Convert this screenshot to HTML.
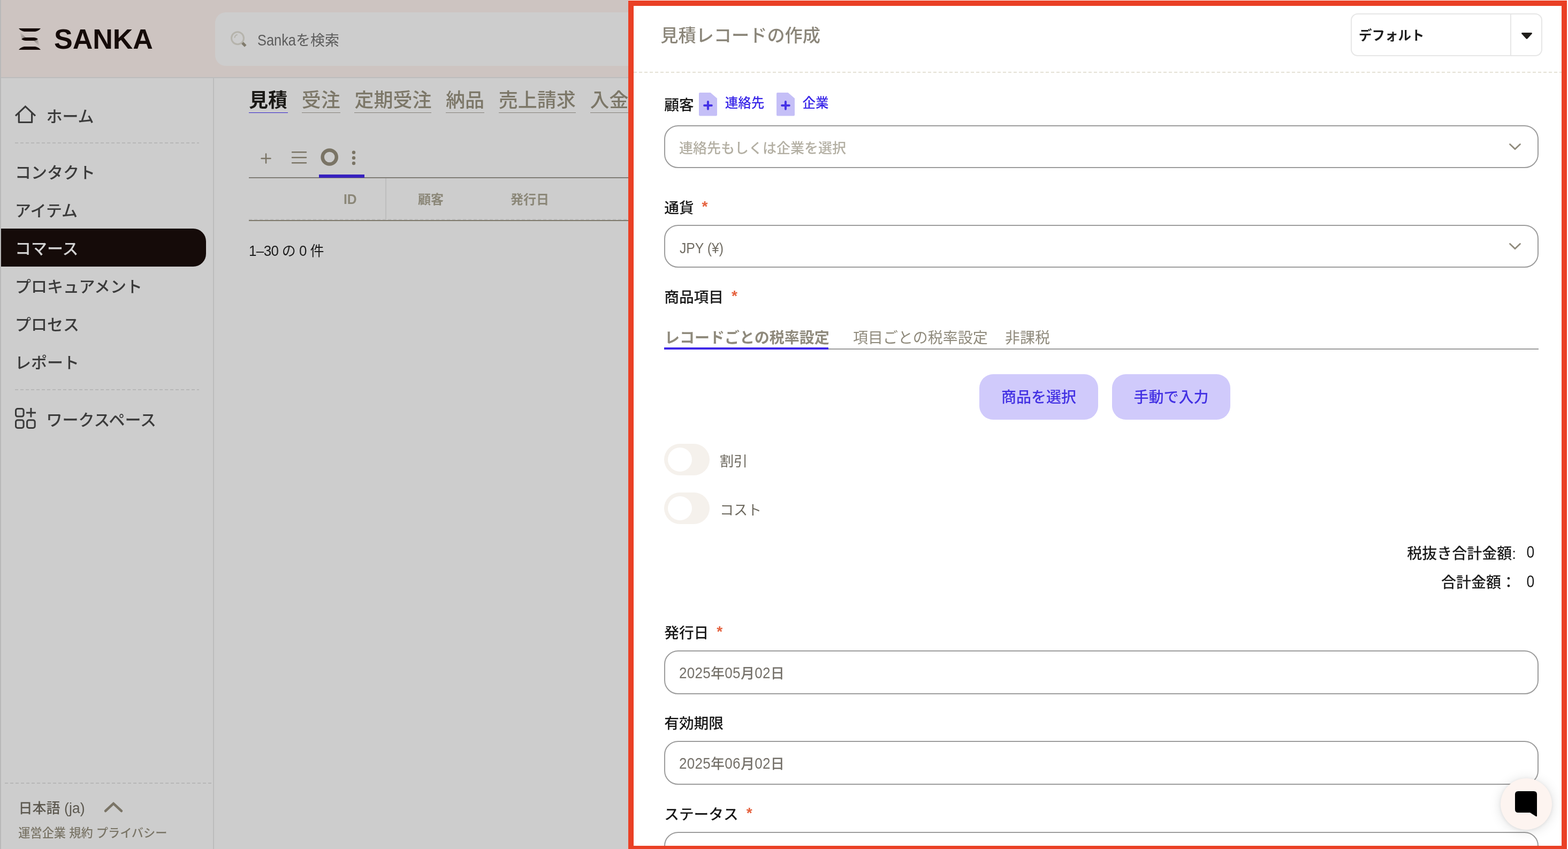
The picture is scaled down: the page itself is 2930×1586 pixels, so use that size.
<!DOCTYPE html>
<html lang="ja">
<head>
<meta charset="utf-8">
<title>Sanka - 見積レコードの作成</title>
<style>
*{box-sizing:border-box;margin:0;padding:0}
html,body{width:2930px;height:1586px;overflow:hidden}
body{will-change:transform;background:#cdcdcd;font-family:"Liberation Sans","Noto Sans CJK JP",sans-serif;font-weight:500;color:#1a1a1a;position:relative}
#root{position:absolute;left:0;top:0;width:2930px;height:1586px;overflow:hidden}
.abs{position:absolute}
.t{position:absolute;white-space:nowrap;line-height:1}
svg{position:absolute;overflow:visible}
.sy{display:inline-block;transform-origin:0 84.6%}

/* ---------- dimmed app behind the panel ---------- */
#edge{left:0;top:0;width:2px;height:1586px;background:#b9b9b9}
#hdr{left:2px;top:0;width:2928px;height:144px;background:#cdc4c1}
#hdrline{left:2px;top:144px;width:2928px;height:2px;background:#bdbdbd}
#brand{left:101px;top:47px;font-size:52px;font-weight:700;color:#150b09;letter-spacing:0}
#search{left:402px;top:23px;width:2400px;height:100px;border-radius:20px;background:#cdcdcd}
#searchtxt{left:481px;top:63px;font-size:27px;font-weight:400;color:#5c5c5c}
#side{left:2px;top:146px;width:396px;height:1440px}
#sideline{left:398px;top:146px;width:2px;height:1440px;background:#bcbcbc}
.nav{position:absolute;left:28px;font-size:30px;font-weight:500;color:#3b3b3b;white-space:nowrap;line-height:1}
.dash{position:absolute;height:2px;background:repeating-linear-gradient(90deg,#b7b7b7 0 6px,transparent 6px 10px)}
#active{left:2px;top:427px;width:383px;height:71px;background:#150b09;border-radius:0 24px 24px 0}
.tab{position:absolute;top:170px;font-size:36px;color:#7c7768;white-space:nowrap;line-height:1;height:41px;border-bottom:1px solid #85817a}
.tab.on{color:#1a1916;font-weight:700;border-bottom:1px solid #3322cc;width:73px}
.th{position:absolute;font-size:24px;font-weight:700;color:#8b8778;white-space:nowrap;line-height:1}

/* ---------- panel ---------- */
#panel{left:1174px;top:0;width:1756px;height:1586px;background:#fff}
#frame{left:1174px;top:1px;width:1754px;height:1589px;border:10px solid #ea4025}
.lbl{position:absolute;left:1241.200px;font-size:27.700px;font-weight:500;color:#171717;white-space:nowrap;line-height:1}
.req{color:#e5623f;font-weight:700;margin-left:15px;font-size:28px;line-height:0;position:relative;top:-3px}
.field{position:absolute;left:1241px;width:1634px;border:2px solid #9c9c9c;border-radius:26px;background:#fff}
.val{position:absolute;left:1270px;font-size:26px;color:#75716a;white-space:nowrap;line-height:1}
.btn{position:absolute;top:699px;height:85px;border-radius:26px;background:#d0cafb;color:#4331e3;font-size:28px;font-weight:500;text-align:center;line-height:87.500px;white-space:nowrap}
.tog{position:absolute;left:1241px;width:85px;height:59px;border-radius:30px;background:#f5f1ec}
.tog i{position:absolute;left:7px;top:7px;width:45px;height:45px;border-radius:50%;background:#fff}
.toglbl{position:absolute;font-size:26px;font-weight:400;color:#6d695f;white-space:nowrap;line-height:1}
.tot{position:absolute;font-size:28px;color:#1c1c1c;white-space:nowrap;line-height:1}
</style>
</head>
<body>
<div id="root">

<!-- ================= dimmed application ================= -->
<div class="abs" id="hdr"></div>
<div class="abs" id="hdrline"></div>
<div class="abs" id="edge"></div>

<svg style="left:35px;top:53px" width="41" height="40" viewBox="0 0 41 40">
  <defs>
    <linearGradient id="lg1" x1="0" y1="0" x2="1" y2="1"><stop offset="0" stop-color="#cdc4c1"/><stop offset="1" stop-color="#8f8885"/></linearGradient>
    <linearGradient id="lg2" x1="0" y1="0" x2="1" y2="1"><stop offset="0" stop-color="#8f8885"/><stop offset="1" stop-color="#cdc4c1"/></linearGradient>
  </defs>
  <path d="M2 6 L14 18 L5 18 Z" fill="url(#lg1)"/>
  <path d="M27 22 L36 22 L39 34 Z" fill="url(#lg2)"/>
  <path d="M0 0 H41 C38 3.5 34 6 29 6 H12 C7 6 3 3.500 0 0 Z" fill="#150b09"/>
  <path d="M5 20 C8 17.800 10 17 13 17 H28 C31 17 33 17.800 36 20 C33 22.200 31 23 28 23 H13 C10 23 8 22.200 5 20 Z" fill="#150b09"/>
  <path d="M0 40 H41 C38 36.500 34 34 29 34 H12 C7 34 3 36.500 0 40 Z" fill="#150b09"/>
</svg>
<div class="t" id="brand">SANKA</div>

<div class="abs" id="search"></div>
<svg style="left:429px;top:56px" width="34" height="34" viewBox="0 0 34 34">
  <circle cx="15" cy="15.300" r="11.500" fill="none" stroke="#b6b4ac" stroke-width="3"/>
  <path d="M9.500 14 A6 6 0 0 1 14 9" fill="none" stroke="#b6b4ac" stroke-width="2" stroke-linecap="round"/>
  <path d="M24 24.200 L29.800 30" fill="none" stroke="#817b6d" stroke-width="5.200" stroke-linecap="butt"/>
</svg>
<div class="t" id="searchtxt"><span class="sy" style="transform:scale(0.94,1.07);margin-right:-4.500px">Sanka</span>を検索</div>

<!-- sidebar -->
<div class="abs" id="sideline"></div>
<svg style="left:26px;top:194px" width="44" height="40" viewBox="0 0 44 40">
  <path d="M3 22.300 L21.400 4.900 L40 22.300" fill="none" stroke="#3a3a3a" stroke-width="3.200" stroke-linejoin="miter"/>
  <path d="M9.300 17.500 V34.500 H33.600 V17.500" fill="none" stroke="#3a3a3a" stroke-width="3.200" stroke-linejoin="round"/>
</svg>
<div class="nav" style="left:86.500px;top:203px">ホーム</div>
<div class="dash" style="left:28px;top:266px;width:344px"></div>
<div class="nav" style="top:308px">コンタクト</div>
<div class="nav" style="top:379px">アイテム</div>
<div class="abs" id="active"></div>
<div class="nav" style="top:450px;color:#d2d2d2">コマース</div>
<div class="nav" style="top:521px">プロキュアメント</div>
<div class="nav" style="top:592px">プロセス</div>
<div class="nav" style="top:663px">レポート</div>
<div class="dash" style="left:28px;top:727px;width:344px"></div>
<svg style="left:26px;top:760px" width="44" height="44" viewBox="0 0 44 44">
  <g fill="none" stroke="#3a3a3a" stroke-width="3">
    <rect x="3.500" y="3.500" width="14.600" height="14.600" rx="3.500"/>
    <rect x="3.500" y="24.800" width="14.600" height="14.600" rx="3.500"/>
    <rect x="24.600" y="24.800" width="14.600" height="14.600" rx="3.500"/>
    <path d="M23 10.900 H41 M31.900 2 V19.600"/>
  </g>
</svg>
<div class="nav" style="left:86.500px;top:770px">ワークスペース</div>

<div class="dash" style="left:9px;top:1462px;width:388px"></div>
<div class="t" style="left:34.500px;top:1497.400px;font-size:26px;color:#5c584f">日本語 <span class="sy" style="transform:scale(1.03,1.06)">(ja)</span></div>
<svg style="left:192px;top:1494px" width="40" height="28" viewBox="0 0 40 28">
  <path d="M5 21 L20 7 L35 21" fill="none" stroke="#7a7466" stroke-width="4.500" stroke-linecap="round" stroke-linejoin="miter"/>
</svg>
<div class="t" style="left:34.300px;top:1546px;font-size:22.200px;color:#7a7567">運営企業 規約 プライバシー</div>

<!-- main tabs -->
<div class="tab on" style="left:465px">見積</div>
<div class="tab" style="left:563.800px">受注</div>
<div class="tab" style="left:662.400px">定期受注</div>
<div class="tab" style="left:833.100px">納品</div>
<div class="tab" style="left:931.800px">売上請求</div>
<div class="tab" style="left:1102.500px">入金</div>

<!-- toolbar -->
<svg style="left:465px;top:270px" width="230" height="50" viewBox="0 0 230 50">
  <g fill="none" stroke="#7a7465" stroke-linecap="round">
    <path d="M23.500 25.900 H40.500 M32 17.400 V34.400" stroke-width="2.500"/>
    <path d="M81 14.200 H107 M81 24.200 H107 M81 34.200 H107" stroke-width="2.500"/>
    <circle cx="150.700" cy="23.500" r="13.100" stroke-width="6.500"/>
  </g>
  <g fill="#7a7465">
    <circle cx="196" cy="14.800" r="3.200"/><circle cx="196" cy="24.900" r="3.200"/><circle cx="196" cy="35" r="3.200"/>
  </g>
</svg>
<div class="abs" style="left:465px;top:331px;width:760px;height:2px;background:#7f7c76"></div>
<div class="abs" style="left:596px;top:326px;width:85px;height:6px;background:#3721bf"></div>

<!-- table header -->
<div class="abs" style="left:720px;top:333px;width:2px;height:77px;background:#bdbdbd"></div>
<div class="th" style="left:641.500px;top:361px"><span class="sy" style="transform:scale(1.03,1.07)">ID</span></div>
<div class="th" style="left:781px;top:361px">顧客</div>
<div class="th" style="left:954px;top:361px">発行日</div>
<div class="abs" style="left:465px;top:409px;width:760px;height:2px;background:repeating-linear-gradient(90deg,#bebebe 0 6px,transparent 6px 10px)"></div>
<div class="abs" style="left:465px;top:411px;width:760px;height:2px;background:#7e796c"></div>
<div class="t" style="left:465px;top:455.500px;font-size:26px;font-weight:400;color:#1c1c1c;word-spacing:-1px"><span class="sy" style="transform:scaleY(1.07);letter-spacing:-0.600px">1–30</span> の <span class="sy" style="transform:scaleY(1.07)">0</span> 件</div>

<!-- ================= side panel ================= -->
<div class="abs" id="panel"></div>

<div class="t" style="left:1234.300px;top:49.500px;font-size:33.200px;color:#8b867a">見積レコードの作成</div>

<div class="abs" style="left:2524px;top:25px;width:358px;height:80px;border:2px solid #e6e6e6;border-radius:13px;background:#fff"></div>
<div class="abs" style="left:2822px;top:27px;width:2px;height:76px;background:#e6e6e6"></div>
<div class="t" style="left:2539px;top:54.500px;font-size:24.500px;font-weight:700;color:#1f1f1f">デフォルト</div>
<svg style="left:2842px;top:60px" width="22" height="14" viewBox="0 0 22 14">
  <path d="M2.500 1 H19.500 Q21.800 1.300 20.500 3.200 L12.300 12.300 Q11 13.400 9.700 12.300 L1.500 3.200 Q0.200 1.300 2.500 1 Z" fill="#1f1d1a"/>
</svg>

<div class="abs" style="left:1184px;top:134px;width:1734px;height:2px;background:repeating-linear-gradient(90deg,#e4e1d5 0 6px,transparent 6px 10px)"></div>

<!-- 顧客 -->
<div class="lbl" style="top:182.500px">顧客</div>
<svg style="left:1306px;top:173px" width="34" height="44" viewBox="0 0 34 44">
  <path d="M2 0 H21.500 L34 10.700 V41.500 Q34 43.500 32 43.500 H2 Q0 43.500 0 41.500 V2 Q0 0 2 0 Z" fill="#c5bff7"/>
  <path d="M10.100 23.900 H23.800 M16.950 17.050 V30.750" stroke="#4532e6" stroke-width="4" stroke-linecap="round" fill="none"/>
</svg>
<div class="t" style="left:1354.700px;top:181px;font-size:24.500px;color:#3a27e8;font-weight:500">連絡先</div>
<svg style="left:1451px;top:173px" width="34" height="44" viewBox="0 0 34 44">
  <path d="M2 0 H21.500 L34 10.700 V41.500 Q34 43.500 32 43.500 H2 Q0 43.500 0 41.500 V2 Q0 0 2 0 Z" fill="#c5bff7"/>
  <path d="M10.100 23.900 H23.800 M16.950 17.050 V30.750" stroke="#4532e6" stroke-width="4" stroke-linecap="round" fill="none"/>
</svg>
<div class="t" style="left:1499.500px;top:181px;font-size:24.500px;color:#3a27e8;font-weight:500">企業</div>

<div class="field" style="top:234px;height:80px"></div>
<div class="val" style="left:1269px;top:264px;color:#b3afa3">連絡先もしくは企業を選択</div>
<svg style="left:2818px;top:265px" width="26" height="18" viewBox="0 0 26 18">
  <path d="M3.500 4.500 L13 13.500 L22.500 4.500" fill="none" stroke="#8f8a7c" stroke-width="2.800" stroke-linecap="round" stroke-linejoin="miter"/>
</svg>

<!-- 通貨 -->
<div class="lbl" style="top:374.500px">通貨<span class="req">*</span></div>
<div class="field" style="top:420px;height:80px"></div>
<div class="val" style="top:450.500px;color:#716d64"><span class="sy" style="transform:scale(0.951,1.08)">JPY (¥)</span></div>
<svg style="left:2818px;top:451px" width="26" height="18" viewBox="0 0 26 18">
  <path d="M3.500 4.500 L13 13.500 L22.500 4.500" fill="none" stroke="#8f8a7c" stroke-width="2.800" stroke-linecap="round" stroke-linejoin="miter"/>
</svg>

<!-- 商品項目 -->
<div class="lbl" style="top:541.500px">商品項目<span class="req">*</span></div>
<div class="t" style="left:1242px;top:618px;font-size:28px;font-weight:700;color:#8f8a7c">レコードごとの税率設定</div>
<div class="t" style="left:1594px;top:618px;font-size:28px;font-weight:400;color:#8f8a7c">項目ごとの税率設定</div>
<div class="t" style="left:1878px;top:618px;font-size:28px;font-weight:400;color:#8f8a7c">非課税</div>
<div class="abs" style="left:1241px;top:651px;width:1634px;height:2px;background:#9b9b9b"></div>
<div class="abs" style="left:1241px;top:649px;width:307px;height:4px;background:#4029e8"></div>

<div class="btn" style="left:1830px;width:222px">商品を選択</div>
<div class="btn" style="left:2078px;width:221px">手動で入力</div>

<div class="tog" style="top:829px"><i></i></div>
<div class="toglbl" style="left:1345px;top:849px">割引</div>
<div class="tog" style="top:920px"><i></i></div>
<div class="toglbl" style="left:1345px;top:939.500px">コスト</div>

<div class="tot" style="right:97px;top:1020.500px">税抜き合計金額:</div>
<div class="tot" style="right:62px;top:1019.300px"><span class="sy" style="transform:scale(0.95,1.1);transform-origin:50% 84.6%">0</span></div>
<div class="tot" style="right:97px;top:1075px">合計金額：</div>
<div class="tot" style="right:62px;top:1074.300px"><span class="sy" style="transform:scale(0.95,1.1);transform-origin:50% 84.6%">0</span></div>

<!-- 発行日 -->
<div class="lbl" style="top:1168.500px">発行日<span class="req">*</span></div>
<div class="field" style="top:1215px;height:82px"></div>
<div class="val" style="left:1269px;top:1244.500px;letter-spacing:0.300px"><span class="sy" style="transform:scaleY(1.1)">2025</span>年<span class="sy" style="transform:scaleY(1.1)">05</span>月<span class="sy" style="transform:scaleY(1.1)">02</span>日</div>

<!-- 有効期限 -->
<div class="lbl" style="top:1337.500px">有効期限</div>
<div class="field" style="top:1384px;height:82px"></div>
<div class="val" style="left:1269px;top:1413.500px;letter-spacing:0.300px"><span class="sy" style="transform:scaleY(1.1)">2025</span>年<span class="sy" style="transform:scaleY(1.1)">06</span>月<span class="sy" style="transform:scaleY(1.1)">02</span>日</div>

<!-- ステータス -->
<div class="lbl" style="top:1507.500px">ステータス<span class="req">*</span></div>
<div class="field" style="top:1554px;height:82px"></div>

<!-- chat bubble -->
<div class="abs" style="left:2804px;top:1454px;width:96px;height:96px;border-radius:50%;background:#fdf4f0;box-shadow:0 2px 22px rgba(0,0,0,.13),0 1px 6px rgba(0,0,0,.07)"></div>
<svg style="left:2831px;top:1478px" width="42" height="48" viewBox="0 0 42 48">
  <path d="M6 0 H35 Q41 0 41 6 V46 Q41 48 39 47 L28 40 H6 Q0 40 0 34 V6 Q0 0 6 0 Z" fill="#000"/>
</svg>

<div class="abs" id="frame"></div>
</div>
</body>
</html>
